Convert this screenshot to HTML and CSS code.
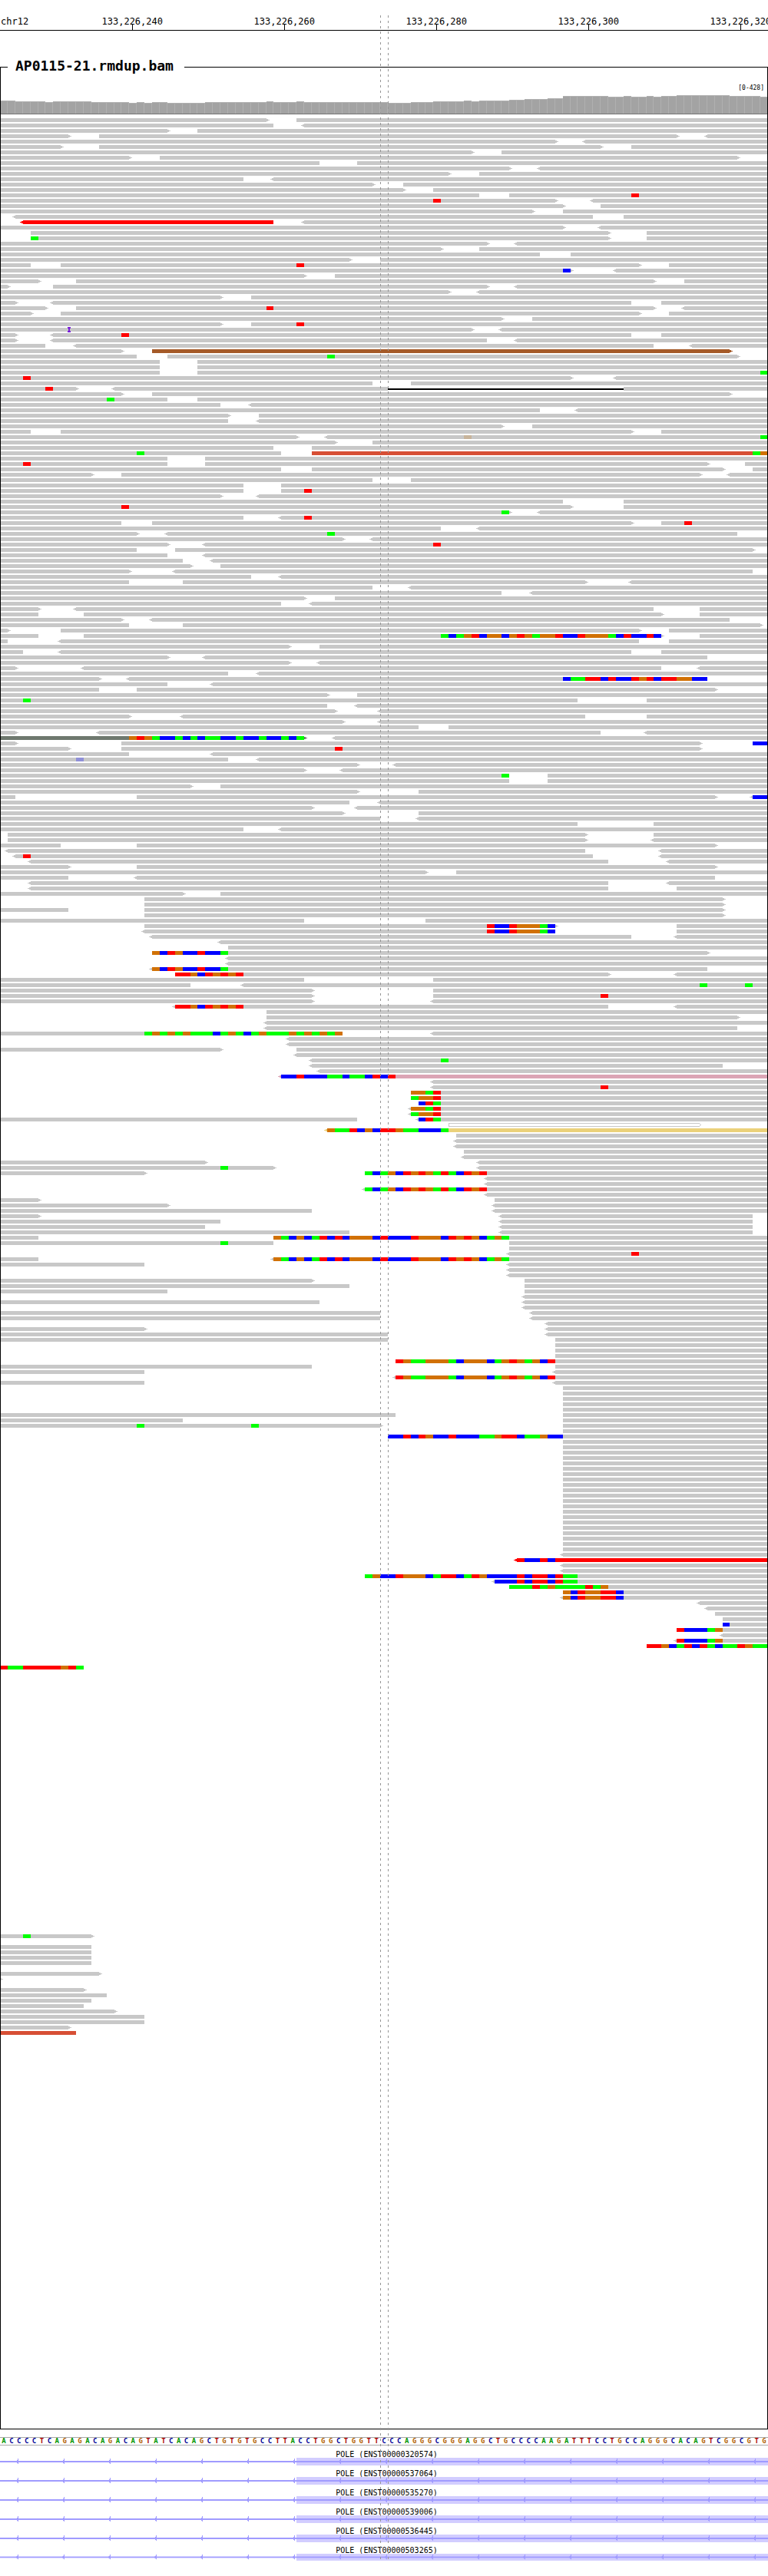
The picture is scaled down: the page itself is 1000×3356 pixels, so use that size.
FILE: index.html
```html
<!DOCTYPE html>
<html lang="en">
<head>
<meta charset="utf-8">
<title>chr12 alignments</title>
<link rel="stylesheet" href="styles.css">
</head>
<body>
<main class="browser">
  <header class="ruler">
    <span class="chrom">chr12</span>
    <span class="tick tick-240">133,226,240</span>
    <span class="tick tick-260">133,226,260</span>
    <span class="tick tick-280">133,226,280</span>
    <span class="tick tick-300">133,226,300</span>
    <span class="tick tick-320">133,226,320</span>
  </header>

  <fieldset class="track">
    <legend>AP0115-21.rmdup.bam</legend>
    <div class="range">[0-428]</div>
    <svg class="coverage" id="coverage" viewBox="1 0 998 28" preserveAspectRatio="none" shape-rendering="crispEdges" role="img" aria-label="Coverage"></svg>
    <svg class="reads" id="reads" viewBox="1 0 998 3010" preserveAspectRatio="none" shape-rendering="crispEdges" role="img" aria-label="Reads"></svg>
  </fieldset>

  <div class="sequence" id="sequence"></div>

  <svg class="defs" aria-hidden="true">
    <defs>
      <pattern id="strand" width="60" height="10" patternUnits="userSpaceOnUse">
        <rect class="intron" y="4" width="60" height="2"/>
        <path class="intron" d="M21 4h1v-1h1v-2h1v7h-1v-1h-1v-1h-1z"/>
      </pattern>
      <symbol id="transcript" viewBox="0 0 1000 10" preserveAspectRatio="none">
        <rect class="exon" x="386" width="614" height="10"/>
        <rect width="1000" height="10" fill="url(#strand)"/>
      </symbol>
    </defs>
  </svg>
  <ul class="genes">
    <li class="gene"><span class="label">POLE (ENST00000320574)</span><svg class="model" shape-rendering="crispEdges"><use href="#transcript"/></svg></li>
    <li class="gene"><span class="label">POLE (ENST00000537064)</span><svg class="model" shape-rendering="crispEdges"><use href="#transcript"/></svg></li>
    <li class="gene"><span class="label">POLE (ENST00000535270)</span><svg class="model" shape-rendering="crispEdges"><use href="#transcript"/></svg></li>
    <li class="gene"><span class="label">POLE (ENST00000539006)</span><svg class="model" shape-rendering="crispEdges"><use href="#transcript"/></svg></li>
    <li class="gene"><span class="label">POLE (ENST00000536445)</span><svg class="model" shape-rendering="crispEdges"><use href="#transcript"/></svg></li>
    <li class="gene"><span class="label">POLE (ENST00000503265)</span><svg class="model" shape-rendering="crispEdges"><use href="#transcript"/></svg></li>
  </ul>

  <div class="guide guide-start"></div>
  <div class="guide guide-end"></div>
</main>
<script src="script.js"></script>
</body>
</html>
```
FILE: styles.css
```css
body {
  margin: 0;
  background: #fff;
  color: #000;
  font-family: "DejaVu Sans Mono", monospace;
}

.browser {
  position: relative;
  padding-bottom: 14px;
  overflow: hidden;
}

/* Ruler: one grid column per base */
.ruler {
  display: grid;
  grid-template-columns: repeat(101, minmax(0, 1fr));
  grid-template-rows: 18px;
  padding-top: 21px;
  border-bottom: 1px solid #000;
  font-size: 12px;
  line-height: 14px;
  white-space: nowrap;
}

.ruler > * {
  grid-row: 1;
}

.chrom {
  grid-column: 1;
  padding-left: 1px;
}

.tick {
  display: flex;
  flex-direction: column;
  align-items: center;
  justify-self: center;
  padding-right: 2px;
}

.tick::after {
  content: "";
  width: 1px;
  height: 7px;
  margin-top: -3px;
  background: #000;
}

.tick-240 { grid-column: 18; }
.tick-260 { grid-column: 38; }
.tick-280 { grid-column: 58; }
.tick-300 { grid-column: 78; }
.tick-320 { grid-column: 98; }

/* Alignment track */
.track {
  min-width: 0;
  margin: 35px 0 0;
  padding: 0;
  border: 1px solid #000;
}

.track legend {
  margin-left: 9px;
  padding: 0 14px 4px 10px;
  font-size: 18px;
  font-weight: bold;
  line-height: 21px;
}

.range {
  padding: 9px 4px 0 0;
  font-size: 8px;
  line-height: 12px;
  text-align: right;
}

.coverage,
.reads {
  display: block;
  width: 100%;
}

.coverage {
  height: 28px;
  margin-bottom: 5px;
}

.depth-edge { fill: #b0b0b0; }
.depth { fill: #a3a3a3; }
.baseline { fill: #737373; }

.read { fill: #c8c8c8; }
.hollow { fill: none; stroke: #c8c8c8; }
.deletion { fill: #000; }
.insertion { fill: #7a20d8; }
.base-A { fill: #00ff00; }
.base-C { fill: #0000ff; }
.base-G { fill: #d17105; }
.base-T { fill: #ff0000; }

/* Reference sequence */
.sequence {
  display: grid;
  grid-template-columns: repeat(101, minmax(0, 1fr));
  margin-top: 10px;
  border-top: 1px solid #a8a8a8;
  border-bottom: 1px solid #a8a8a8;
  font-size: 9px;
  font-weight: bold;
  line-height: 9px;
  text-align: center;
}

.ref-A { color: #009600; }
.ref-C { color: #000096; }
.ref-G { color: #b46405; }
.ref-T { color: #aa0000; }

/* Gene models */
.defs {
  display: block;
  width: 0;
  height: 0;
}

.genes {
  margin: 6px 0 0;
  padding: 0;
  list-style: none;
}

.gene {
  display: grid;
  grid-template-rows: 10px 10px;
  padding-bottom: 5px;
}

.gene:last-child {
  grid-template-rows: 10px 9px;
  padding-bottom: 6px;
}

.label {
  padding-left: 7px;
  font-size: 10px;
  line-height: 12px;
  text-align: center;
}

.model {
  display: block;
  width: 100%;
  height: 10px;
}

.gene:last-child .model {
  height: 9px;
}

.intron { fill: #a09bff; }
.exon { fill: #d2cdff; }

/* Centre guides over all tracks */
.guide {
  position: absolute;
  top: 20px;
  bottom: 22px;
  width: 1px;
  background: repeating-linear-gradient(#969696 0 3px, transparent 3px 7px);
}

.guide-start { left: calc(100% * 50 / 101); }
.guide-end { left: calc(100% * 51 / 101); }
```
FILE: script.js
```js
const BASES = 101;
const ROW = 7;
const px = (base) => Math.round((base * 1000) / BASES);
const rect = (cls, x, y, w, h, extra = "") =>
  `<rect class="${cls}" x="${x}" y="${y}" width="${w}" height="${h}"${extra}/>`;

/* Coverage: [number of bases, empty pixels above the bar] */
const depth = [
  [2, 10], [4, 11], [1, 12], [5, 11], [5, 12], [1, 13], [1, 12], [1, 13], [2, 12], [5, 13],
  [8, 12], [1, 11], [3, 12], [1, 11], [11, 12], [3, 13], [3, 12], [4, 11], [1, 10], [1, 11],
  [4, 10], [2, 9], [3, 8], [2, 7], [6, 4], [2, 5], [1, 4], [2, 5], [1, 4], [1, 5],
  [2, 4], [7, 3], [4, 4], [1, 5]
];
let bars = "";
let at = 0;
for (const [count, top] of depth) {
  for (let i = 0; i < count; i++, at++) {
    const x = px(at);
    const w = px(at + 1) - x;
    bars += rect("depth-edge", x, top, w, 28 - top);
    bars += rect("depth", x, top + 1, w - 1, 27 - top);
  }
}
bars += rect("baseline", 0, 27, 1000, 1);
document.getElementById("coverage").innerHTML = bars;

/*
  One row per entry. Positions count bases from the left edge.
    a-b      read (a or b left out: runs off the view), < or > marks its strand
    a-b#hex  read in its own colour
    @n:ACGT  mismatching bases from n on
    @n#hex   low quality mismatch
    =a-b     deletion
    +n       insertion
    [a-b     hollow read
  "xN" after | repeats the row N times.
*/
const clips = {
  a: "@64:TCCTGGGAC", b: "@20:GCTGCCTCCA", c: "@23:TTGCTGTGT",
  d: "@48:ACAGCTGTGATACTGT", e: "@36:GACGCATCTCGGGCTCCCTGGGCTGTGCAGA",
  f: "@52:TGAAGGGACGGGCAGTGAGCT", g: "@74:GCTGGTTC", h: "@89:TCCCAG"
};
const rows = `
-35> 39-
-36 <40-
-22> 26-
-9> 13-89> <93-
-73> <77-
-8> 13-79> 83-
-62> 66-
-17> 21-97>
-42 47-
-67> <71-
-59> 63-
-32 <36-
-49> 53-
-53> 57-
-63 67- @83:T
-73> <78- @57:T
-74> 79-
-70> 74-
<2-78 82-
<3-36#ff0000 <40-
-74> <79-
4-80> 85-
4-80> 85- @4:A
-64> <68-
-58> 63-
-71 75-
-46> 50-
-4 8-84> 88- @39:T
-75> <81- @74:C
-40> 44-
-5> 10-86> 90-
-1> 7-64> <68-
-59> <63-
-29> 33-
-2> <7-83 87-
-6> 10-86> <90- @35:T
-4> 8-84> 88-
-66> 70-
-29> 33- @39:T
-62> <66- +9
-2> <7-83 87- @16:T
-2> <7-64 <68-
-6 <10-86 <91-
-16> 20-96>#a55a28
-18 22-97> @43:A
-21 26-
-21 26-
-21 26- @100:A
-75> <81- @3:T
-49 54-
-10> <15- @6:T =51-82
-16> 20-96>
-22 26- @14:A
-29 <33-
-71 <76-
-30> 34-
-30 <34-
-66> 70-
-4 8-83> 87-
-39> <43- @61#c8b49b @100:A
-44> 49-
-36 41-
-37 41-99#d74f35 @99:AG @18:A
-22 27-
-22 27-93> 98- @3:T
-37 41-95> 99-
-12> 16-92> <96-
-49 54-
-32 37-
-32 37- @40:T
-29> <34-
-74 82-
-75> 82- @16:T
-67> <71- @66:A
-32 <37- @40:T
-16 20-83> 87- @90:T
-58 <63-
-18> <22-97 @43:A
-45> <49-
-22> <27- @57:T
-18 23-99>
-22 <27-
-24 <28-
-25> 29-
-17> <23-99
-33 <37-
-17 24-77> <83-
-49 <54-
-66 <70-
-40> 44-
-37 <41-
-5> <10-86 92-
-5 11-87> 92-
-16> <20-96
-17 24-100>
-1> 8-84> 88-
-5 11-87> 92- @58:ACAGTCGGCGTGAGGTCCTGGGACTCCTC
-1 <8-84 88-
-38> 42-
-3 <8-83 87-
-22> <27-93
-38> <42-
-2> <11-87 <92-
-30 <34-
-13> <17-93 @74:CAATTCTCCTGTCTTGGCC
-22 <28-
-13 18-94>
-43> 47-
-76 85- @3:A
-43 <47-
-44> <50-
-17> <24-77 85-
-45> <50-
-55 59-
-2> <13-79 <85-
-40>#6e786e @17:GTGACCACACAACCACCACCACA <44-
-2> 16-92> @99:CC
-9> 16-92> @44:T
-17 <28-
-30 <34- @10#9090d8
-47> <52-
-40> <45-
-67 72- @66:A
-67 72-
-25> 29-
-47> 55-
-2 18-94> <99- @99:CC
-46 <50-
-41> <47-
-45> 55-
-50 <55-
-76 86-
-32 <37-
1-77> 86-
1-77> <86-
-8 18-94>
<1-77 <87-
<2-78 <87- @3:T
<4-80 <88-
-9> 18-94>
-56> 60-
-9 <18-94
<4-80 <88-
<4-80 89-
-24> 29-
19-95>
19-95>
-9 19-95>
19-95>
-40 56-
19-73> 89- a
<19-73 89- a
<20-83 <89-
<29-
30-
20-93> b
<30-
<30-
<20-93 b
23-80> <89- c
-40 57-
-25 <32- @92:A @98:A
-41> 57-
-41> 57- @79:T
-41> <57-
<23-80 <89- c
35-
35-97>
<35-
<35-97
-45 @19:AGAGAGAAACAGACAGAAAGAGAGAG <57-
<38-
<38-
-29> 39-
<39-
<41- @58:A
<41-95
<42-
<37-#dba5b5 @37:CCTCCCAACAACTCT
<57-
<57- @79:T
54- @54:GGAT
54- @54:AGGT
55- @55:CTA
<54- @54:GGAT
<54- @54:AGGT
-47 <55- @55:CTA
[59-92
<43-#ebd17a @43:GAATCGCTTGAACCCA
60-
<60-
<60-
61-
<61-
-27> <63-
-36> <63- @29:A
-19> 48- d
<64-
<64-
<48- d
<64-
-5> 65-
-22> <65-
-41 <65-
-5> <66-99
-29 <66-99
-27 <66-99
-46 <66-99
-5 36- e
-36 67- @29:A
67-
<67- @83:T
-5 <36- e
-19 <67-
<67-
<67-
-41> 69-
-46 69-
-22 69-
<69-
-42 <69-
<69-
-50 <70-
-50 <70-
<72-
-19> <72-
-51 <72-
-51 73-
73-|x3
52- f
-41 73-
-19 <73-
<52- f
-19 <73-
74-|x5
-52 74-
-24 74-
-50> 74- @18:A @33:A
74-
51- @51:CCTCTGCCTCCCAAGTTCAAGCC
74-|x21
<74-
<68-#ff0000 @69:CC @72:C
<74-
<74-
48- @48:AGCCTGGGCATTCATGCCCCTCTTCTAA
<65- @65:CCCTCTTCTAA
67- @67:AAATAGAAAATAG
74- g
<74- g
<92-
<93-
94-
95-
95- @95:C
89- h
<95-
<89- h
85- @85:TTGCATCTACAATGAA
|x3
-11 @0:TAATTTTTGTA
|x49
-12> @3:A
|x1
-12|x4
|x1
-13>
-0>
|x1
-11>
-14
-12
-11
-15>
-19|x2
-9>
-10#d74f35
`.trim().split("\n").flatMap((line) => {
  const [row, times] = line.split("|x");
  return Array(Number(times || 1)).fill(row);
});

function drawRead(token, y) {
  const [, left, a, b, right, colour] = token.match(/^(<?)(\d*)-(\d*)(>?)(#\w+)?$/);
  const x1 = a ? px(+a) : 0;
  const x2 = b ? px(+b) : 1000;
  const fill = colour ? ` style="fill:${colour}"` : "";
  let out = rect("read", x1, y, x2 - x1, 5, fill);
  if (left) out += rect("read", x1 - 2, y + 1, 2, 3, fill) + rect("read", x1 - 4, y + 2, 2, 1, fill);
  if (right) out += rect("read", x2, y + 1, 2, 3, fill) + rect("read", x2 + 2, y + 2, 2, 1, fill);
  return out;
}

function drawMark(token, y) {
  const [, n, colour, letters] = token.match(/^@(\d+)(#\w+)?:?(\w*)$/);
  const start = +n;
  if (colour) return rect("read", px(start), y, px(start + 1) - px(start), 5, ` style="fill:${colour}"`);
  return [...letters].map((base, i) =>
    rect("base-" + base, px(start + i), y, px(start + i + 1) - px(start + i), 5)).join("");
}

function drawToken(raw, y) {
  const token = clips[raw] || raw;
  const span = () => token.slice(1).split("-").map((n) => px(+n));
  if (token[0] === "@") return drawMark(token, y);
  if (token[0] === "=") {
    const [x1, x2] = span();
    return rect("gap", x1, y, x2 - x1, 5, ' fill="#fff"') + rect("deletion", x1, y + 2, x2 - x1, 2);
  }
  if (token[0] === "[") {
    const [x1, x2] = span();
    return `<path class="hollow" d="M${x1}.5 ${y + 0.5}H${x2 - 0.5}l2 2l-2 2H${x1}.5z"/>`;
  }
  if (token[0] === "+") {
    const x = px(+token.slice(1));
    return rect("insertion", x, y - 1, 2, 7) + rect("insertion", x - 1, y - 1, 4, 2) + rect("insertion", x - 1, y + 4, 4, 2);
  }
  return drawRead(token, y);
}

document.getElementById("reads").innerHTML = rows
  .map((row, i) => row.split(" ").filter(Boolean).map((t) => drawToken(t, i * ROW)).join(""))
  .join("");

/* Reference sequence */
const reference =
  "ACCCCTCAGAGACAGACAGTATCACAGCTGTGTGCCTTACCTGGCTGGTTCCCAGGGCGG" +
  "GAGGCTGCCCCAAGATTTCCTGCCAGGGCACAGTCGGCGTG";
document.getElementById("sequence").innerHTML = [...reference]
  .map((base) => `<span class="ref-${base}">${base}</span>`).join("");
```
